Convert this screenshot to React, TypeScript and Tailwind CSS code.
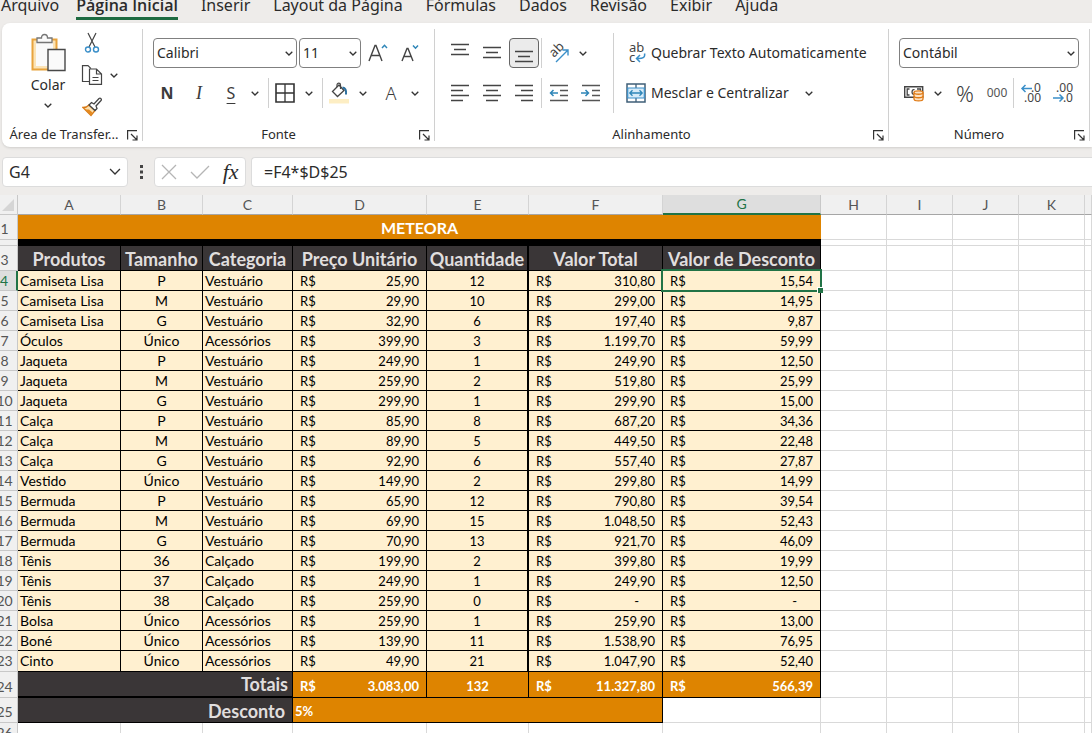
import React from "react";

type Product = {
  name: string;
  size: string;
  category: string;
  price: string;
  quantity: string;
  total: string;
  discount: string;
};

const toProduct = (line: string): Product => {
  const [name, size, category, price, quantity, total, discount] =
    line.split("|");
  return { name, size, category, price, quantity, total, discount };
};

const products = [
  "Camiseta Lisa|P|Vestuário|25,90|12|310,80|15,54",
  "Camiseta Lisa|M|Vestuário|29,90|10|299,00|14,95",
  "Camiseta Lisa|G|Vestuário|32,90|6|197,40|9,87",
  "Óculos|Único|Acessórios|399,90|3|1.199,70|59,99",
  "Jaqueta|P|Vestuário|249,90|1|249,90|12,50",
  "Jaqueta|M|Vestuário|259,90|2|519,80|25,99",
  "Jaqueta|G|Vestuário|299,90|1|299,90|15,00",
  "Calça|P|Vestuário|85,90|8|687,20|34,36",
  "Calça|M|Vestuário|89,90|5|449,50|22,48",
  "Calça|G|Vestuário|92,90|6|557,40|27,87",
  "Vestido|Único|Vestuário|149,90|2|299,80|14,99",
  "Bermuda|P|Vestuário|65,90|12|790,80|39,54",
  "Bermuda|M|Vestuário|69,90|15|1.048,50|52,43",
  "Bermuda|G|Vestuário|70,90|13|921,70|46,09",
  "Tênis|36|Calçado|199,90|2|399,80|19,99",
  "Tênis|37|Calçado|249,90|1|249,90|12,50",
  "Tênis|38|Calçado|259,90|0|-|-",
  "Bolsa|Único|Acessórios|259,90|1|259,90|13,00",
  "Boné|Único|Acessórios|139,90|11|1.538,90|76,95",
  "Cinto|Único|Acessórios|49,90|21|1.047,90|52,40",
].map(toProduct);

const tabs = [
  "Arquivo",
  "Página Inicial",
  "Inserir",
  "Layout da Página",
  "Fórmulas",
  "Dados",
  "Revisão",
  "Exibir",
  "Ajuda",
];

const columns = ["A", "B", "C", "D", "E", "F", "G", "H", "I", "J", "K", ""];

const headings = [
  "Produtos",
  "Tamanho",
  "Categoria",
  "Preço Unitário",
  "Quantidade",
  "Valor Total",
  "Valor de Desconto",
];

/* ---------- icons ---------- */

const Chevron = ({ className = "w-2" }: { className?: string }) => (
  <svg viewBox="0 0 8 5" className={className} fill="none" stroke="#333">
    <path d="M.7 .7 4 4 7.3 .7" strokeWidth="1.3" vectorEffect="non-scaling-stroke" />
  </svg>
);

const PasteIcon = () => (
  <svg width="36" height="40" viewBox="0 0 36 40" fill="none">
    <path d="M2.500 6.500h24v30h-24z" fill="#fbe3b6" stroke="#e8a33d" strokeWidth="2" />
    <path d="M6 9h17v24H6z" fill="#fafafa" />
    <path
      d="M7 9.500V5h4.500c0-2 1-3.500 3-3.500s3 1.500 3 3.500H22v4.500z"
      fill="#fafafa"
      stroke="#767676"
      strokeWidth="1.300"
    />
    <path d="M18 16.500h17v21H18z" fill="#fafafa" stroke="#484848" strokeWidth="1.400" />
  </svg>
);

const CutIcon = () => (
  <svg width="16" height="22" viewBox="0 0 16 22" fill="none">
    <path d="m4 1 7 14M12 1 5 15" stroke="#444" strokeWidth="1.200" />
    <circle cx="4" cy="17.500" r="2.500" stroke="#3a8fc9" strokeWidth="1.400" />
    <circle cx="12" cy="17.500" r="2.500" stroke="#3a8fc9" strokeWidth="1.400" />
  </svg>
);

const CopyIcon = () => (
  <svg width="22" height="20" viewBox="0 0 22 20" fill="none" stroke="#444" strokeWidth="1.200">
    <path d="M8 16.500H1.500V.7H7l3 3" />
    <path d="M8.500 4h7l5 5v10.300h-12zM15.500 4v5h5M11.500 12.500h6M11.500 15.500h6" fill="#fff" />
  </svg>
);

const BrushIcon = () => (
  <svg width="20" height="20" viewBox="0 0 20 20" fill="none" strokeWidth="1.300">
    <path d="M1 10.500c3 0 4.500-.8 6-2.500l6 5.500L9 18.500z" fill="#fbe0b0" stroke="#d97b16" />
    <path d="m3 12.500 6 5.500 1.500-2.500-3.500-3z" fill="#e58a1f" />
    <path d="m7 8 2.500-2.500 2.500 1.500L17 1.500c1.500-1 3 .8 2 2L14 9l1 2.500-2 2z" fill="#fff" stroke="#444" />
  </svg>
);

const LauncherIcon = () => (
  <svg width="11" height="11" viewBox="0 0 11 11" fill="none" stroke="#333" strokeWidth="1.200">
    <path d="M.6 9.500V.6H10M4 4l5.500 5.500M10 5.500V10H5.500" />
  </svg>
);

const FontSizeIcon = ({ grow }: { grow: boolean }) => (
  <svg width="20" height="20" viewBox="0 0 20 20" fill="none">
    {grow ? (
      <path d="M1 18 7 2.500h1L14 18M3.200 12.500h8.600" stroke="#444" strokeWidth="1.400" />
    ) : (
      <path d="M2 18 7 5.500h1L13 18M4 13.500h7" stroke="#444" strokeWidth="1.400" />
    )}
    <path
      d={grow ? "m14 5 2.500-2.700L19 5" : "m13 2.500 2.500 2.700L18 2.500"}
      stroke="#2f86b8"
      strokeWidth="1.500"
    />
  </svg>
);

const BordersIcon = () => (
  <svg width="20" height="20" viewBox="0 0 20 20" fill="none" stroke="#333">
    <path d="M1 1h18v18H1z" strokeWidth="1.600" />
    <path d="M10 1v18M1 10h18" strokeWidth="1.300" />
  </svg>
);

const FillIcon = () => (
  <svg width="20" height="22" viewBox="0 0 20 22" fill="none">
    <path d="M0 17h20v4.500H0z" fill="#fdeec4" />
    <path d="M3.500 9.500 10 3l5 5.500-6.500 6z" stroke="#444" strokeWidth="1.300" />
    <path d="M8 5V3c0-2.500 3.500-2.500 3.500 0v4" stroke="#444" strokeWidth="1.200" />
    <path d="M13.500 5.500c3 .5 4 3 3.500 7" stroke="#2b6f9e" strokeWidth="2" />
  </svg>
);

const LinesIcon = ({ d }: { d: string }) => (
  <svg width="20" height="20" viewBox="0 0 20 20" fill="none" stroke="#444" strokeWidth="1.400">
    <path d={d} />
  </svg>
);

const IndentIcon = ({ right = false }: { right?: boolean }) => (
  <svg width="20" height="20" viewBox="0 0 20 20" fill="none" strokeWidth="1.400">
    <path d="M1 2.500h18M11 7.500h8M11 12.500h8M1 17.500h18" stroke="#555" />
    <path
      d={right ? "M0 10h7M4.500 7l3 3-3 3" : "M9 10H2M4.500 7l-3 3 3 3"}
      stroke="#2f86b8"
      strokeWidth="1.500"
    />
  </svg>
);

const OrientationIcon = () => (
  <svg width="22" height="22" viewBox="0 0 22 22" fill="none">
    <text
      x="6"
      y="16"
      fontSize="13"
      fontFamily="Noto Sans"
      fill="#444"
      transform="rotate(-45 6 16)"
    >
      ab
    </text>
    <path d="M8 20 20 8M14.500 8H20v5.500" stroke="#3a8fc9" strokeWidth="1.400" />
  </svg>
);

const WrapIcon = () => (
  <svg width="20" height="22" viewBox="0 0 20 22" fill="none">
    <text x="3" y="10" fontSize="13" fontFamily="Noto Sans" fill="#444">
      ab
    </text>
    <text x="3" y="20" fontSize="13" fontFamily="Noto Sans" fill="#444">
      c
    </text>
    <path d="M18.500 11.500c1 4-2 5.500-7.500 5M14 13l-3.500 3.500L14 20" stroke="#3a8fc9" strokeWidth="1.500" />
  </svg>
);

const MergeIcon = () => (
  <svg width="20" height="20" viewBox="0 0 20 20" fill="none">
    <path d="M1 1h18v18H1z" fill="#fff" stroke="#3f5f78" strokeWidth="1.500" />
    <path d="M10 1v4M10 15v4" stroke="#3f5f78" strokeWidth="1.300" />
    <path d="M1.700 5h16.600v10H1.700z" fill="#d7ebf8" stroke="#3a8fc9" strokeWidth="1.200" />
    <path d="M4 10h12M6.500 7.300 3.800 10l2.700 2.700M13.500 7.300l2.700 2.700-2.700 2.700" stroke="#2f86b8" strokeWidth="1.300" />
  </svg>
);

const MoneyIcon = () => (
  <svg width="22" height="18" viewBox="0 0 22 18" fill="none">
    <path d="M1.700 2.700h18v10.600h-18z" stroke="#444" strokeWidth="1.400" />
    <path d="M6.500 5H4.200v6h2.300M11.500 5.700c-3-1.200-3.500 5.600 0 4.600M14 5h3.500v2" stroke="#444" strokeWidth="1.300" />
    <path
      d="M11 8.500v6.500c0 2.500 9 2.500 9 0V8.500c0-2.300-9-2.300-9 0z"
      fill="#fce3c4"
      stroke="#e07b16"
      strokeWidth="1.300"
    />
    <path d="M11 8.500c0 2.300 9 2.300 9 0M11 12c0 2.300 9 2.300 9 0" stroke="#e07b16" strokeWidth="1.300" />
  </svg>
);

const DecimalIcon = ({ increase }: { increase: boolean }) => (
  <svg width="22" height="22" viewBox="0 0 22 22" fill="none">
    <text x="21" y="10" fontSize="12" textAnchor="end" fontFamily="Noto Sans" fill="#444">
      {increase ? ".0" : ".00"}
    </text>
    <text x="21" y="20" fontSize="12" textAnchor="end" fontFamily="Noto Sans" fill="#444">
      {increase ? ".00" : ".0"}
    </text>
    <path
      d={increase ? "M12 6.500H2M5.500 3 2 6.500 5.500 10" : "M1 16h10M7.500 12.500 11 16l-3.500 3.500"}
      stroke="#3a8fc9"
      strokeWidth="1.500"
    />
  </svg>
);

/* ---------- ribbon ---------- */

type ToolProps = {
  label: string;
  active?: boolean;
  children: React.ReactNode;
};

const Tool = ({ label, active = false, children }: ToolProps) => (
  <button
    aria-label={label}
    className={
      active
        ? "mx-px flex h-[30px] w-[30px] shrink-0 items-center justify-center rounded border border-[#666] bg-[#ebebeb]"
        : "flex h-8 w-8 shrink-0 items-center justify-center rounded text-[#3b3b3b] hover:bg-gray-100"
    }
  >
    {children}
  </button>
);

const Drop = ({ label }: { label: string }) => (
  <button aria-label={label} className="flex h-8 w-4 shrink-0 items-center justify-center">
    <Chevron />
  </button>
);

const Separator = ({ className }: { className: string }) => (
  <span className={`h-[30px] w-px shrink-0 bg-[#d0d0d0] ${className}`} />
);

type PickerProps = { label: string; value: string; className: string };

const Picker = ({ label, value, className }: PickerProps) => (
  <span className={`relative ${className}`}>
    <select
      aria-label={label}
      className="block h-[30px] w-full appearance-none rounded border border-[#808080] bg-white pl-[3px] text-sm"
    >
      <option>{value}</option>
    </select>
    <span className="pointer-events-none absolute inset-y-0 right-1 flex items-center">
      <Chevron />
    </span>
  </span>
);

type GroupProps = {
  title: string;
  className: string;
  children: React.ReactNode;
};

const Group = ({ title, className, children }: GroupProps) => (
  <section className={`flex flex-col ${className}`}>
    <div className="h-[90px] pt-[10px]">{children}</div>
    <div className="mt-[10px] flex h-6 items-center">
      <h2 className="flex-1 text-center text-[13px] whitespace-nowrap">{title}</h2>
      <button aria-label={`Opções de ${title}`} className="flex w-5 justify-center">
        <LauncherIcon />
      </button>
    </div>
  </section>
);

const Divider = () => <span className="my-[6px] w-px shrink-0 bg-[#d0d0d0]" />;

const Ribbon = () => (
  <div className="ml-0.5 flex h-[124px] rounded-l-lg bg-white shadow">
    <Group title="Área de Transfer..." className="w-[140px] pl-1">
      <div className="flex">
        <button className="ml-5 flex w-11 flex-col items-center text-sm">
          <PasteIcon />
          <span className="pt-0.5">Colar</span>
          <span className="pt-2">
            <Chevron />
          </span>
        </button>
        <div className="ml-2 flex flex-col">
          <button aria-label="Recortar" className="flex h-5 w-7 items-center justify-center">
            <CutIcon />
          </button>
          <div className="flex h-11 items-center">
            <button aria-label="Copiar" className="flex w-7 justify-center">
              <CopyIcon />
            </button>
            <Drop label="Opções de cópia" />
          </div>
          <button aria-label="Pincel de Formatação" className="flex h-5 w-7 items-center justify-center">
            <BrushIcon />
          </button>
        </div>
      </div>
    </Group>
    <Divider />
    <Group title="Fonte" className="w-[291px]">
      <div className="flex h-10 items-center pl-[10px]">
        <Picker label="Fonte" value="Calibri" className="w-36" />
        <Picker label="Tamanho da fonte" value="11" className="mr-px ml-0.5 w-[62px]" />
        <Tool label="Aumentar fonte">
          <FontSizeIcon grow />
        </Tool>
        <Tool label="Diminuir fonte">
          <FontSizeIcon grow={false} />
        </Tool>
      </div>
      <div className="flex h-10 items-center pl-2">
        <Tool label="Negrito">
          <span className="text-base font-bold">N</span>
        </Tool>
        <Tool label="Itálico">
          <span className="font-['Liberation_Serif',serif] text-lg italic">I</span>
        </Tool>
        <Tool label="Sublinhado">
          <span className="text-base underline underline-offset-4">S</span>
        </Tool>
        <Drop label="Opções de sublinhado" />
        <Separator className="ml-[5px]" />
        <Tool label="Bordas">
          <BordersIcon />
        </Tool>
        <Drop label="Opções de bordas" />
        <Separator className="ml-[5px]" />
        <Tool label="Cor de preenchimento">
          <FillIcon />
        </Tool>
        <div className="mr-1 flex">
          <Drop label="Opções de preenchimento" />
        </div>
        <Tool label="Cor da fonte">
          <span className="text-lg font-light">A</span>
        </Tool>
        <Drop label="Opções de cor da fonte" />
      </div>
    </Group>
    <Divider />
    <Group title="Alinhamento" className="flex-1">
      <div className="flex">
        <div className="w-[179px] border-r border-[#d0d0d0] pl-[9px]">
          <div className="flex h-10 items-center">
            <Tool label="Alinhar em cima">
              <LinesIcon d="M1 1.500h18M4 6.500h12M1 11.500h18" />
            </Tool>
            <Tool label="Alinhar no meio">
              <LinesIcon d="M1 4.500h18M4 9.500h12M1 14.500h18" />
            </Tool>
            <Tool label="Alinhar embaixo" active>
              <LinesIcon d="M1 8.500h18M4 13.500h12M1 18.500h18" />
            </Tool>
            <Separator className="mx-px" />
            <Tool label="Orientação">
              <OrientationIcon />
            </Tool>
            <Drop label="Opções de orientação" />
          </div>
          <div className="flex h-10 items-center">
            <Tool label="Alinhar à esquerda">
              <LinesIcon d="M1 2.500h18M1 7.500h12M1 12.500h18M1 17.500h12" />
            </Tool>
            <Tool label="Centralizar">
              <LinesIcon d="M1 2.500h18M4 7.500h12M1 12.500h18M4 17.500h12" />
            </Tool>
            <Tool label="Alinhar à direita">
              <LinesIcon d="M1 2.500h18M7 7.500h12M1 12.500h18M7 17.500h12" />
            </Tool>
            <Separator className="mx-px" />
            <Tool label="Diminuir recuo">
              <IndentIcon />
            </Tool>
            <Tool label="Aumentar recuo">
              <IndentIcon right />
            </Tool>
          </div>
        </div>
        <div className="pl-3 text-sm whitespace-nowrap">
          <button className="flex h-10 items-center gap-[5px]">
            <WrapIcon />
            Quebrar Texto Automaticamente
          </button>
          <div className="flex h-10 items-center gap-3">
            <button className="flex items-center gap-[5px]">
              <MergeIcon />
              Mesclar e Centralizar
            </button>
            <Drop label="Opções de mesclagem" />
          </div>
        </div>
      </div>
    </Group>
    <Divider />
    <Group title="Número" className="w-[200px]">
      <div className="flex h-10 items-center pl-[10px]">
        <Picker label="Formato de número" value="Contábil" className="w-[180px]" />
      </div>
      <div className="flex h-10 items-center pl-[9px]">
        <Tool label="Formato de contabilização">
          <MoneyIcon />
        </Tool>
        <div className="mr-[3px] flex">
          <Drop label="Opções de contabilização" />
        </div>
        <Tool label="Porcentagem">
          <span className="text-[22px] font-light">%</span>
        </Tool>
        <Tool label="Separador de milhares">
          <span className="text-xs text-[#555]">000</span>
        </Tool>
        <Separator className="mr-px" />
        <Tool label="Aumentar casas decimais">
          <DecimalIcon increase />
        </Tool>
        <Tool label="Diminuir casas decimais">
          <DecimalIcon increase={false} />
        </Tool>
      </div>
    </Group>
    <Divider />
    <span className="w-0.5" />
  </div>
);

const FormulaBar = () => (
  <div className="flex h-12 items-center gap-[5px] pt-0.5 pl-0.5">
    <div className="flex h-[30px] w-[126px] items-center rounded border border-[#dcdcdc] bg-white pr-1.5">
      <input
        aria-label="Caixa de nome"
        defaultValue="G4"
        className="w-full min-w-0 pl-1.5 text-base outline-none"
      />
      <button aria-label="Mostrar nomes" className="shrink-0">
        <Chevron className="w-3" />
      </button>
    </div>
    <svg width="16" height="14" viewBox="0 0 16 14" fill="#444">
      <path d="M7 0h3v3H7zM7 5.500h3v3H7zM7 11h3v3H7z" />
    </svg>
    <div className="flex h-[30px] w-[92px] items-center justify-around rounded border border-[#dcdcdc] bg-white">
      <button aria-label="Cancelar">
        <svg width="16" height="16" viewBox="0 0 16 16" stroke="#b5b5b5" strokeWidth="1.300">
          <path d="m1 1 14 14M15 1 1 15" />
        </svg>
      </button>
      <button aria-label="Inserir">
        <svg width="20" height="14" viewBox="0 0 20 14" fill="none" stroke="#b5b5b5" strokeWidth="1.300">
          <path d="m1 7 6 6L19 1" />
        </svg>
      </button>
      <button
        aria-label="Inserir função"
        className="font-['Liberation_Serif',serif] text-[22px] leading-6 italic"
      >
        fx
      </button>
    </div>
    <input
      aria-label="Barra de fórmulas"
      defaultValue="=F4*$D$25"
      className="h-[30px] min-w-0 flex-1 rounded-l border border-r-0 border-[#dcdcdc] bg-white pl-3 text-base outline-none"
    />
  </div>
);

/* ---------- sheet ---------- */

type RowNumberProps = { n: string; active?: boolean; tall?: boolean };

const RowNumber = ({ n, active = false, tall = false }: RowNumberProps) => (
  <th
    scope="row"
    className={
      active
        ? "border-r-2 border-b border-r-[#217346] border-b-[#c8c8c8] bg-[#dedede] text-sm leading-4 font-normal text-[#217346]"
        : "border-r border-b border-[#c8c8c8] bg-[#f0f0f0] text-sm leading-4 font-normal text-[#555]"
    }
  >
    <span className={`flex justify-center pr-2 ${tall ? "pt-1" : ""}`}>{n}</span>
  </th>
);

const EmptyCells = ({ count }: { count: number }) => (
  <>
    {Array.from({ length: count }, (_, i) => (
      <td key={i} className="border-r border-b border-[#d9d9d9]" />
    ))}
  </>
);

const Money = ({ value }: { value: string }) => (
  <span className="flex justify-between px-[7px]">
    <span>R$</span>
    <span className={value === "-" ? "pr-4" : ""}>{value}</span>
  </span>
);

const Sheet = () => (
  <table className="w-full table-fixed border-separate border-spacing-0 bg-white font-['Lato','Noto_Sans',sans-serif] text-[13px] leading-4 text-black">
    <colgroup>
      <col className="w-[18px]" />
      <col className="w-[103px]" />
      <col className="w-[82px]" />
      <col className="w-[90px]" />
      <col className="w-[134px]" />
      <col className="w-[102px]" />
      <col className="w-[134px]" />
      <col className="w-[158px]" />
      <col className="w-[66px]" />
      <col className="w-[66px]" />
      <col className="w-[66px]" />
      <col className="w-[66px]" />
      <col />
    </colgroup>
    <thead>
      <tr className="h-5">
        <td className="border-r border-b border-[#c8c8c8] bg-[#f0f0f0]">
          <svg width="12" height="12" viewBox="0 0 12 12" fill="#d5d5d5" className="ml-0.5">
            <path d="M12 0v12H0z" />
          </svg>
        </td>
        {columns.map((c) => (
          <th
            key={c}
            scope="col"
            className={
              c === "G"
                ? "border-r border-b-2 border-r-[#c8c8c8] border-b-[#217346] bg-[#dedede] text-sm leading-4 font-normal text-[#217346]"
                : "border-r border-b border-r-[#d4d4d4] border-b-[#a6a6a6] bg-[#f0f0f0] text-sm leading-4 font-normal text-[#555]"
            }
          >
            {c}
          </th>
        ))}
      </tr>
    </thead>
    <tbody>
      <tr className="h-[25px]">
        <RowNumber n="1" tall />
        <td colSpan={7} className="border-b border-black bg-[#de8400] pt-0.5 text-center text-base leading-5 font-bold text-white">
          METEORA
        </td>
        <EmptyCells count={5} />
      </tr>
      <tr className="h-1.5">
        <th className="border-r border-b border-[#c8c8c8] bg-[#f0f0f0]" />
        <td colSpan={7} className="bg-black" />
        <EmptyCells count={5} />
      </tr>
      <tr className="h-[25px]">
        <RowNumber n="3" tall />
        {headings.map((h) => (
          <td
            key={h}
            className={`border-b border-black bg-[#3a3637] pt-0.5 text-center text-lg leading-5 font-bold whitespace-nowrap text-[#e0dede] ${
              h === "Quantidade" ? "border-r-2" : "border-r"
            }`}
          >
            {h}
          </td>
        ))}
        <EmptyCells count={5} />
      </tr>
      {products.map((p, i) => (
        <tr key={i} className={i === products.length - 1 ? "h-[21px]" : "h-5"}>
          <RowNumber n={String(i + 4)} active={i === 0} />
          <td className="border-r border-b border-black bg-[#fff0d0] pl-0.5 text-sm leading-4">{p.name}</td>
          <td className="border-r border-b border-black bg-[#fff0d0] text-center text-sm leading-4">{p.size}</td>
          <td className="border-r border-b border-black bg-[#fff0d0] pl-0.5 text-sm leading-4">{p.category}</td>
          <td className="border-r border-b border-black bg-[#fff0d0]">
            <Money value={p.price} />
          </td>
          <td className="border-r-2 border-b border-black bg-[#fff0d0] text-center">{p.quantity}</td>
          <td className="border-r border-b border-black bg-[#fff0d0]">
            <Money value={p.total} />
          </td>
          <td className="relative border-r border-b border-black bg-[#fff0d0]">
            <Money value={p.discount} />
            {i === 0 && (
              <span className="absolute -inset-0.5 z-10 border-2 border-[#217346]">
                <span className="absolute -right-[3px] -bottom-[3px] h-[6px] w-[6px] border-t border-l border-white bg-[#217346]" />
              </span>
            )}
          </td>
          <EmptyCells count={5} />
        </tr>
      ))}
      <tr className="h-[26px] font-bold text-white">
        <RowNumber n="24" tall />
        <td
          colSpan={3}
          className="border-r border-b-2 border-black bg-[#3a3637] pr-1 text-right text-lg leading-5 text-[#e0dede]"
        >
          Totais
        </td>
        <td className="border-r border-b border-black bg-[#de8400] pt-0.5">
          <Money value="3.083,00" />
        </td>
        <td className="border-r border-b border-black bg-[#de8400] pt-0.5 text-center">132</td>
        <td className="border-r border-b border-black bg-[#de8400] pt-0.5">
          <Money value="11.327,80" />
        </td>
        <td className="border-r border-b border-black bg-[#de8400] pt-0.5">
          <Money value="566,39" />
        </td>
        <EmptyCells count={5} />
      </tr>
      <tr className="h-[25px] font-bold text-white">
        <RowNumber n="25" tall />
        <td
          colSpan={3}
          className="border-r border-b border-black bg-[#3a3637] pt-0.5 pr-[7px] text-right text-lg leading-5 text-[#e0dede]"
        >
          Desconto
        </td>
        <td colSpan={3} className="border-r border-b border-black bg-[#de8400] pt-0.5 pl-0.5">
          5%
        </td>
        <EmptyCells count={6} />
      </tr>
      <tr className="h-5">
        <RowNumber n="26" />
        <EmptyCells count={12} />
      </tr>
    </tbody>
  </table>
);

const App = () => {
  return (
    <div className="h-screen overflow-hidden bg-[#eeecea] font-['Noto_Sans',sans-serif] text-[#2b2b2b]">
      <nav className="flex h-[23px] items-end gap-[23px] overflow-hidden pb-[3px] pl-px text-base leading-6 whitespace-nowrap">
        {tabs.map((tab) => (
          <a
            key={tab}
            href="#"
            className={
              tab === "Página Inicial"
                ? "-ml-1.5 border-b-[3px] border-[#1e6b41] font-['Open_Sans','Noto_Sans',sans-serif] font-semibold"
                : "border-b-[3px] border-transparent"
            }
          >
            {tab}
          </a>
        ))}
      </nav>
      <Ribbon />
      <FormulaBar />
      <Sheet />
    </div>
  );
};

export default App;
